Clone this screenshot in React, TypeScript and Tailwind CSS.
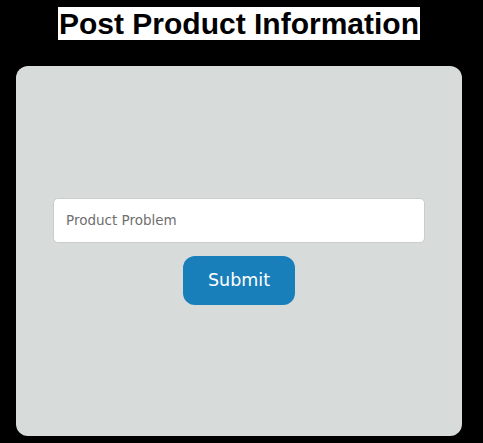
export default function App() {
  return (
    <div className="flex min-h-[443px] w-full flex-col items-center bg-black pr-[5px]">
      <h1 className="mt-[7px] bg-white px-[1px] font-['Liberation_Sans',Arial,sans-serif] text-[30px] leading-[33px] font-bold text-black">
        Post Product Information
      </h1>

      <div className="mt-[26px] flex h-[370px] w-[446px] flex-col items-center justify-center gap-[13px] rounded-[12px] bg-[#d7dbda]">
        <input
          type="text"
          placeholder="Product Problem"
          className="h-[45px] w-[372px] rounded-[5px] border border-[#c9cdcd] bg-white px-[12px] font-['DejaVu_Sans',Tahoma,sans-serif] text-[13.5px] text-[#333] outline-none placeholder:text-[#6f6f6f]"
        />
        <button className="h-[49px] w-[112px] rounded-[12px] bg-[#197fbb] font-['DejaVu_Sans',Tahoma,sans-serif] text-[17.5px] text-white">
          Submit
        </button>
      </div>
    </div>
  );
}
